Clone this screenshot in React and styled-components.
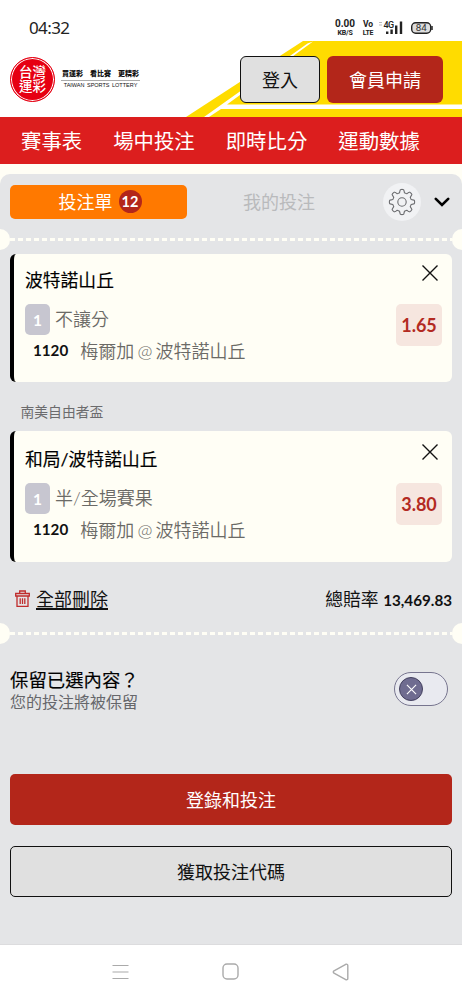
import React, {useState} from 'react';
import styled, {createGlobalStyle} from 'styled-components'

const GlobalStyle = createGlobalStyle`
    * {
        box-sizing: border-box;
    }
    body {
        margin: 0;
        background: #fff;
        font-family: Lato, "Noto Sans CJK TC", sans-serif;
        color: #111;
    }
    button {
        font-family: inherit;
        padding: 0;
        margin: 0;
    }
`
const Page = styled.div`
    display: flex;
    flex-direction: column;
    width: 462px;
    height: 1000px;
    overflow: hidden;
    background: #fffef5;
`
const StatusBar = styled.div`
    display: flex;
    align-items: center;
    height: 41px;
    padding: 15px 29px 0 29px;
    background: #fff;
`
const Clock = styled.span`
    flex-grow: 1;
    font: 400 17px/26px "Noto Sans", sans-serif;
    letter-spacing: -0.6px;
    color: #222;
`
const StatusPair = styled.div`
    display: flex;
    flex-direction: column;
    align-items: center;
    width: ${props => props.w}px;
    margin-right: ${props => props.gap}px;
    font: 700 ${props => props.top}px/10px Roboto, sans-serif;
    white-space: nowrap;
    color: #222;
    small {
        font-size: 7px;
        line-height: 8px;
        letter-spacing: -0.2px;
    }
`
const Signal = styled.svg`
    margin-right: 8px;
`
const Header = styled.header`
    position: relative;
    display: flex;
    align-items: center;
    height: 76px;
    padding: 0 19px 0 10px;
    background: #fff;
`
const Backdrop = styled.svg`
    position: absolute;
    top: 0;
    right: 0;
`
const Logo = styled.div`
    display: flex;
    flex-grow: 1;
    align-items: center;
    gap: 6px;
`
const Seal = styled.div`
    display: flex;
    flex-direction: column;
    align-items: center;
    justify-content: center;
    width: 45px;
    height: 45px;
    border-radius: 50%;
    border: 1.5px solid #e60012;
    box-shadow: inset 0 0 0 1px #fff;
    background: #e60012;
    color: #fff;
    font-size: 13.5px;
    line-height: 14px;
    font-weight: 500;
`
const Slogan = styled.div`
    width: 79px;
    text-align: center;
    white-space: nowrap;
`
const SloganZh = styled.div`
    display: flex;
    justify-content: space-between;
    padding: 0 1px 1px;
    border-bottom: 1px solid #aaa;
    font-size: 7px;
    line-height: 11px;
    font-weight: 900;
`
const SloganEn = styled.div`
    font: 400 5.5px/9px "Liberation Sans", sans-serif;
    word-spacing: 1px;
    color: #111;
`
const HeaderButton = styled.button`
    position: relative;
    width: ${props => props.w}px;
    height: 47px;
    margin-left: 7px;
    padding-bottom: 1px;
    border: ${props => props.primary ? 'none' : '1.5px solid #111'};
    border-radius: 6px;
    background: ${props => props.primary ? '#b3261a' : '#e0e0e0'};
    color: ${props => props.primary ? '#fff' : '#111'};
    font-size: 18px;
`
const Nav = styled.nav`
    display: flex;
    align-items: center;
    gap: 31px;
    height: 47px;
    margin-bottom: 10px;
    padding: 1px 0 0 21px;
    background: #dc1e1e;
    color: #fff;
    font-size: 20.4px;
    line-height: 30px;
    white-space: nowrap;
`
const Slip = styled.main`
    flex-grow: 1;
    display: flex;
    flex-direction: column;
    border-radius: 10px 10px 0 0;
    background: #e4e5e7;
`
const Tabs = styled.div`
    display: flex;
    align-items: center;
    height: 55px;
    padding: 0 10px;
`
const Tab = styled.button`
    display: flex;
    align-items: center;
    justify-content: center;
    gap: 6px;
    width: ${props => props.active ? 177 : 184}px;
    height: 34px;
    padding-left: ${props => props.active ? 3 : 0}px;
    border: none;
    border-radius: 5px;
    background: ${props => props.active ? '#ff7900' : 'transparent'};
    color: ${props => props.active ? '#fff' : '#b9babc'};
    font-size: 18px;
    line-height: 26px;
`
const Count = styled.span`
    width: 23px;
    height: 23px;
    border-radius: 50%;
    background: #b3261a;
    font-size: 14.5px;
    line-height: 23px;
    font-weight: 700;
`
const Gear = styled.button`
    display: flex;
    align-items: center;
    justify-content: center;
    width: 38px;
    height: 38px;
    margin: 0 13px 0 12px;
    border: none;
    border-radius: 50%;
    background: #f1f2f4;
`
const Tear = styled.div`
    display: flex;
    align-items: center;
    height: 21px;
    margin-bottom: ${props => props.gap || 0}px;
    overflow: hidden;
    &::before, &::after {
        content: '';
        flex-shrink: 0;
        width: 10px;
        height: 21px;
        background: #fffef5;
        border-radius: 0 11px 11px 0;
    }
    &::after {
        border-radius: 11px 0 0 11px;
    }
`
const Dashes = styled.div`
    flex-grow: 1;
    height: 3px;
    background: repeating-linear-gradient(90deg, #fffef5 0 5.5px, transparent 5.5px 8px);
`
const Card = styled.article`
    display: flex;
    justify-content: space-between;
    height: ${props => props.h}px;
    margin: 0 10px;
    padding: 0 10px 0 11px;
    border-left: 4px solid #000;
    border-radius: 6px;
    background: #fffef5;
`
const Pick = styled.div`
    padding-top: ${props => props.top}px;
    white-space: nowrap;
`
const PickName = styled.h3`
    margin: 0 0 10px;
    font-size: 17.8px;
    line-height: 28px;
    font-weight: 400;
    color: #000;
    -webkit-text-stroke: 0.15px #000;
`
const Market = styled.div`
    display: flex;
    align-items: center;
    gap: 5px;
    height: 31px;
    color: #6b6a66;
    font-size: 18px;
    font-weight: 350;
    line-height: 26px;
    span:last-child {
        margin-top: -2px;
    }
`
const Leg = styled.span`
    width: 25px;
    height: 31px;
    border-radius: 5px;
    background: #c7c6d0;
    color: #fff;
    font-size: 15.5px;
    line-height: 32px;
    font-weight: 700;
    text-align: center;
`
const Match = styled.div`
    display: flex;
    align-items: center;
    gap: 12px;
    height: 28px;
    margin-top: 1px;
    padding-left: 8px;
    color: #6b6a66;
    font-size: 18px;
    font-weight: 350;
    word-spacing: -1.7px;
    b {
        color: #111;
        font-size: 15.2px;
        font-weight: 700;
    }
`
const Side = styled.div`
    display: flex;
    flex-direction: column;
    align-items: flex-end;
    gap: 22px;
    padding-top: ${props => props.top}px;
    svg {
        margin-right: 3px;
    }
`
const Odds = styled.div`
    width: 46px;
    height: 42px;
    border-radius: 5px;
    background: #f6e6df;
    color: #b32a22;
    font-size: 18px;
    line-height: 42px;
    font-weight: 700;
    text-align: center;
`
const League = styled.div`
    height: 49px;
    padding-left: 20.5px;
    color: #6b6b6d;
    font-size: 13.8px;
    line-height: 59px;
`
const Summary = styled.div`
    display: flex;
    align-items: center;
    justify-content: space-between;
    height: 61px;
    padding: 12px 10px 0 15px;
    font-size: 18px;
`
const ClearAll = styled.a`
    display: flex;
    align-items: center;
    gap: 6px;
    line-height: 26px;
    span {
        text-decoration: underline;
        text-decoration-thickness: 1.5px;
        text-underline-offset: 2px;
    }
`
const Total = styled.span`
    margin-top: -2px;
    white-space: nowrap;
    font-size: 17.8px;
    b {
        font-size: 15.2px;
    }
`
const Keep = styled.div`
    display: flex;
    align-items: center;
    justify-content: space-between;
    height: 46px;
    margin: 23px 14px 0 10px;
`
const KeepTitle = styled.div`
    font-size: 18.4px;
    line-height: 24px;
    color: #000;
    -webkit-text-stroke: 0.15px #000;
`
const KeepNote = styled.div`
    font-size: 16px;
    line-height: 20px;
    color: #66676b;
`
const Toggle = styled.button`
    display: flex;
    align-items: center;
    justify-content: ${props => props.on ? 'flex-end' : 'flex-start'};
    width: 54px;
    height: 34px;
    margin-bottom: 2px;
    padding: 0 4px;
    border: 1.5px solid #77758f;
    border-radius: 17px;
    background: #e9eaf0;
`
const Knob = styled.span`
    display: flex;
    align-items: center;
    justify-content: center;
    width: 24px;
    height: 24px;
    border: 1px solid #44415f;
    border-radius: 50%;
    background: #6f6c90;
`
const Actions = styled.div`
    display: flex;
    flex-direction: column;
    gap: 21px;
    padding: 61px 10px 0;
`
const ActionButton = styled.button`
    height: 51px;
    padding-bottom: 2px;
    border: ${props => props.primary ? 'none' : '1.5px solid #111'};
    border-radius: 5px;
    background: ${props => props.primary ? '#b3261a' : '#e0e0e0'};
    color: ${props => props.primary ? '#fff' : '#111'};
    font-size: 18px;
`
const SystemBar = styled.footer`
    display: flex;
    align-items: center;
    justify-content: space-between;
    height: 56px;
    padding: 0 113px 2px 112px;
    border-top: 1px solid #dcdcde;
    background: #fff;
`

const navList = ['賽事表', '場中投注', '即時比分', '運動數據']

const betList = [
    {pick: '波特諾山丘', market: '不讓分', odds: '1.65', h: 128, top: 12, side: 10},
    {league: '南美自由者盃', pick: '和局/波特諾山丘', market: '半/全場賽果', odds: '3.80', h: 131, top: 14, side: 12},
]

function Cross ({size, color, width}) {
    return (
        <svg width={size} height={size} viewBox="0 0 18 18" fill="none" stroke={color} strokeWidth={width}>
            <path d="M1.5 1.5l15 15M16.5 1.5l-15 15" />
        </svg>
    )
}

function SignalIcon () {
    return (
        <Signal width="24" height="16" viewBox="0 0 24 16" fill="#222">
            <path d="M7 11.5h2.4V14H7zM11.400 9.500h2.400V14h-2.400zM16 5.500h2.400V14H16zM20.800 1.500h2.400V14h-2.400z" />
            <path d="M0 2.500h3M0 5h3" stroke="#bbb" strokeWidth="1" />
            <text x="4.500" y="8" fontFamily="Roboto" fontSize="9" fontWeight="500" letterSpacing="-0.5">4G</text>
        </Signal>
    )
}

function BatteryIcon () {
    return (
        <svg width="22" height="12" viewBox="0 0 22 12">
            <rect x="0.7" y="0.7" width="19" height="10.600" rx="4" fill="#ddd" stroke="#222" strokeWidth="1.400" />
            <path d="M21 4v4" stroke="#222" strokeWidth="1.500" />
            <text x="10.200" y="9.400" textAnchor="middle" fontFamily="Roboto" fontSize="9.800" fill="#333">84</text>
        </svg>
    )
}

function GearIcon () {
    // eight rounded teeth around a small hub
    const points = []
    for (let i = 0; i < 96; i++) {
        const a = i / 96 * Math.PI * 2
        const r = 11 + 1.6 * Math.tanh(3 * Math.cos(a * 8))
        points.push(`${(14 + r * Math.sin(a)).toFixed(2)} ${(14 - r * Math.cos(a)).toFixed(2)}`)
    }
    return (
        <svg width="28" height="28" viewBox="0 0 28 28" fill="none" stroke="#6c6d70" strokeWidth="1.1" strokeLinejoin="round">
            <path d={`M${points.join('L')}Z`} />
            <circle cx="14" cy="14" r="4.2" />
        </svg>
    )
}

function TrashIcon () {
    return (
        <svg width="15" height="18" viewBox="0 0 15 18" fill="none" stroke="#bf2c2c" strokeWidth="1.3">
            <path d="M0.700 3.500h13.600v2.500H0.700zM4.700 3.300V1h5.600v2.300M2 6v10.300h11V6M5.200 8.300v5.700M7.500 8.300v5.700M9.800 8.300v5.700" />
        </svg>
    )
}

function Bet ({bet}) {
    return (
        <>
            {bet.league ? <League>{bet.league}</League> : null}
            <Card h={bet.h}>
                <Pick top={bet.top}>
                    <PickName>{bet.pick}</PickName>
                    <Market><Leg>1</Leg><span>{bet.market}</span></Market>
                    <Match><b>1120</b><span>梅爾加 @ 波特諾山丘</span></Match>
                </Pick>
                <Side top={bet.side}>
                    <Cross size={18} color="#111" width={1.4} />
                    <Odds>{bet.odds}</Odds>
                </Side>
            </Card>
        </>
    )
}

function App () {
    let [keep, setKeep] = useState(false)

    const NavItems = navList.map((item) => <span key={item}>{item}</span>)
    const Bets = betList.map((item) => <Bet bet={item} key={item.pick} />)

    return (
        <Page>
            <GlobalStyle />
            <StatusBar>
                <Clock>04:32</Clock>
                <StatusPair w={22} gap={6} top={10}>0.00<small>KB/S</small></StatusPair>
                <StatusPair w={12} gap={5} top={8.5}>Vo<small>LTE</small></StatusPair>
                <SignalIcon />
                <BatteryIcon />
            </StatusBar>
            <Header>
                <Backdrop width="276" height="76" viewBox="186 41 276 76">
                    <path d="M186 117L303 41H462V117z" fill="#ffdc00" />
                    <path d="M204 117L307.500 43.500L313 41.500L227 104.500H462V109H221L209 117z" fill="#fff" />
                </Backdrop>
                <Logo>
                    <Seal><span>台灣</span><span>運彩</span></Seal>
                    <Slogan>
                        <SloganZh><span>買運彩</span><span>看比賽</span><span>更精彩</span></SloganZh>
                        <SloganEn>TAIWAN SPORTS LOTTERY</SloganEn>
                    </Slogan>
                </Logo>
                <HeaderButton w={80}>登入</HeaderButton>
                <HeaderButton w={116} primary>會員申請</HeaderButton>
            </Header>
            <Nav>{NavItems}</Nav>
            <Slip>
                <Tabs>
                    <Tab active>投注單<Count>12</Count></Tab>
                    <Tab>我的投注</Tab>
                    <Gear><GearIcon /></Gear>
                    <svg width="16" height="10" viewBox="0 0 16 10" fill="none" stroke="#000" strokeWidth="2.6">
                        <path d="M1.800 1.800L8 8L14.200 1.800" strokeLinecap="round" />
                    </svg>
                </Tabs>
                <Tear gap={4}><Dashes /></Tear>
                {Bets}
                <Summary>
                    <ClearAll><TrashIcon /><span>全部刪除</span></ClearAll>
                    <Total>總賠率 <b>13,469.83</b></Total>
                </Summary>
                <Tear><Dashes /></Tear>
                <Keep>
                    <div>
                        <KeepTitle>保留已選內容？</KeepTitle>
                        <KeepNote>您的投注將被保留</KeepNote>
                    </div>
                    <Toggle on={keep} onClick={() => setKeep(!keep)}>
                        <Knob><Cross size={11} color="#fff" width={1.8} /></Knob>
                    </Toggle>
                </Keep>
                <Actions>
                    <ActionButton primary>登錄和投注</ActionButton>
                    <ActionButton>獲取投注代碼</ActionButton>
                </Actions>
            </Slip>
            <SystemBar>
                <svg width="17" height="16" viewBox="0 0 17 16" stroke="#aaa" strokeWidth="1.2">
                    <path d="M0.500 1.500h16M0.500 8h16M0.500 14.500h16" />
                </svg>
                <svg width="17" height="17" viewBox="0 0 17 17" fill="none" stroke="#aaa" strokeWidth="1.4">
                    <rect x="1" y="1" width="15" height="15" rx="4" />
                </svg>
                <svg width="17" height="18" viewBox="0 0 17 18" fill="none" stroke="#aaa" strokeWidth="1.4" strokeLinejoin="round">
                    <path d="M14.200 1.200L2 7.800Q0.600 9 2 10.200L14.200 16.800Q15.800 17 15.800 15.500V2.500Q15.800 1 14.200 1.200z" />
                </svg>
            </SystemBar>
        </Page>
    )
}
export default App
